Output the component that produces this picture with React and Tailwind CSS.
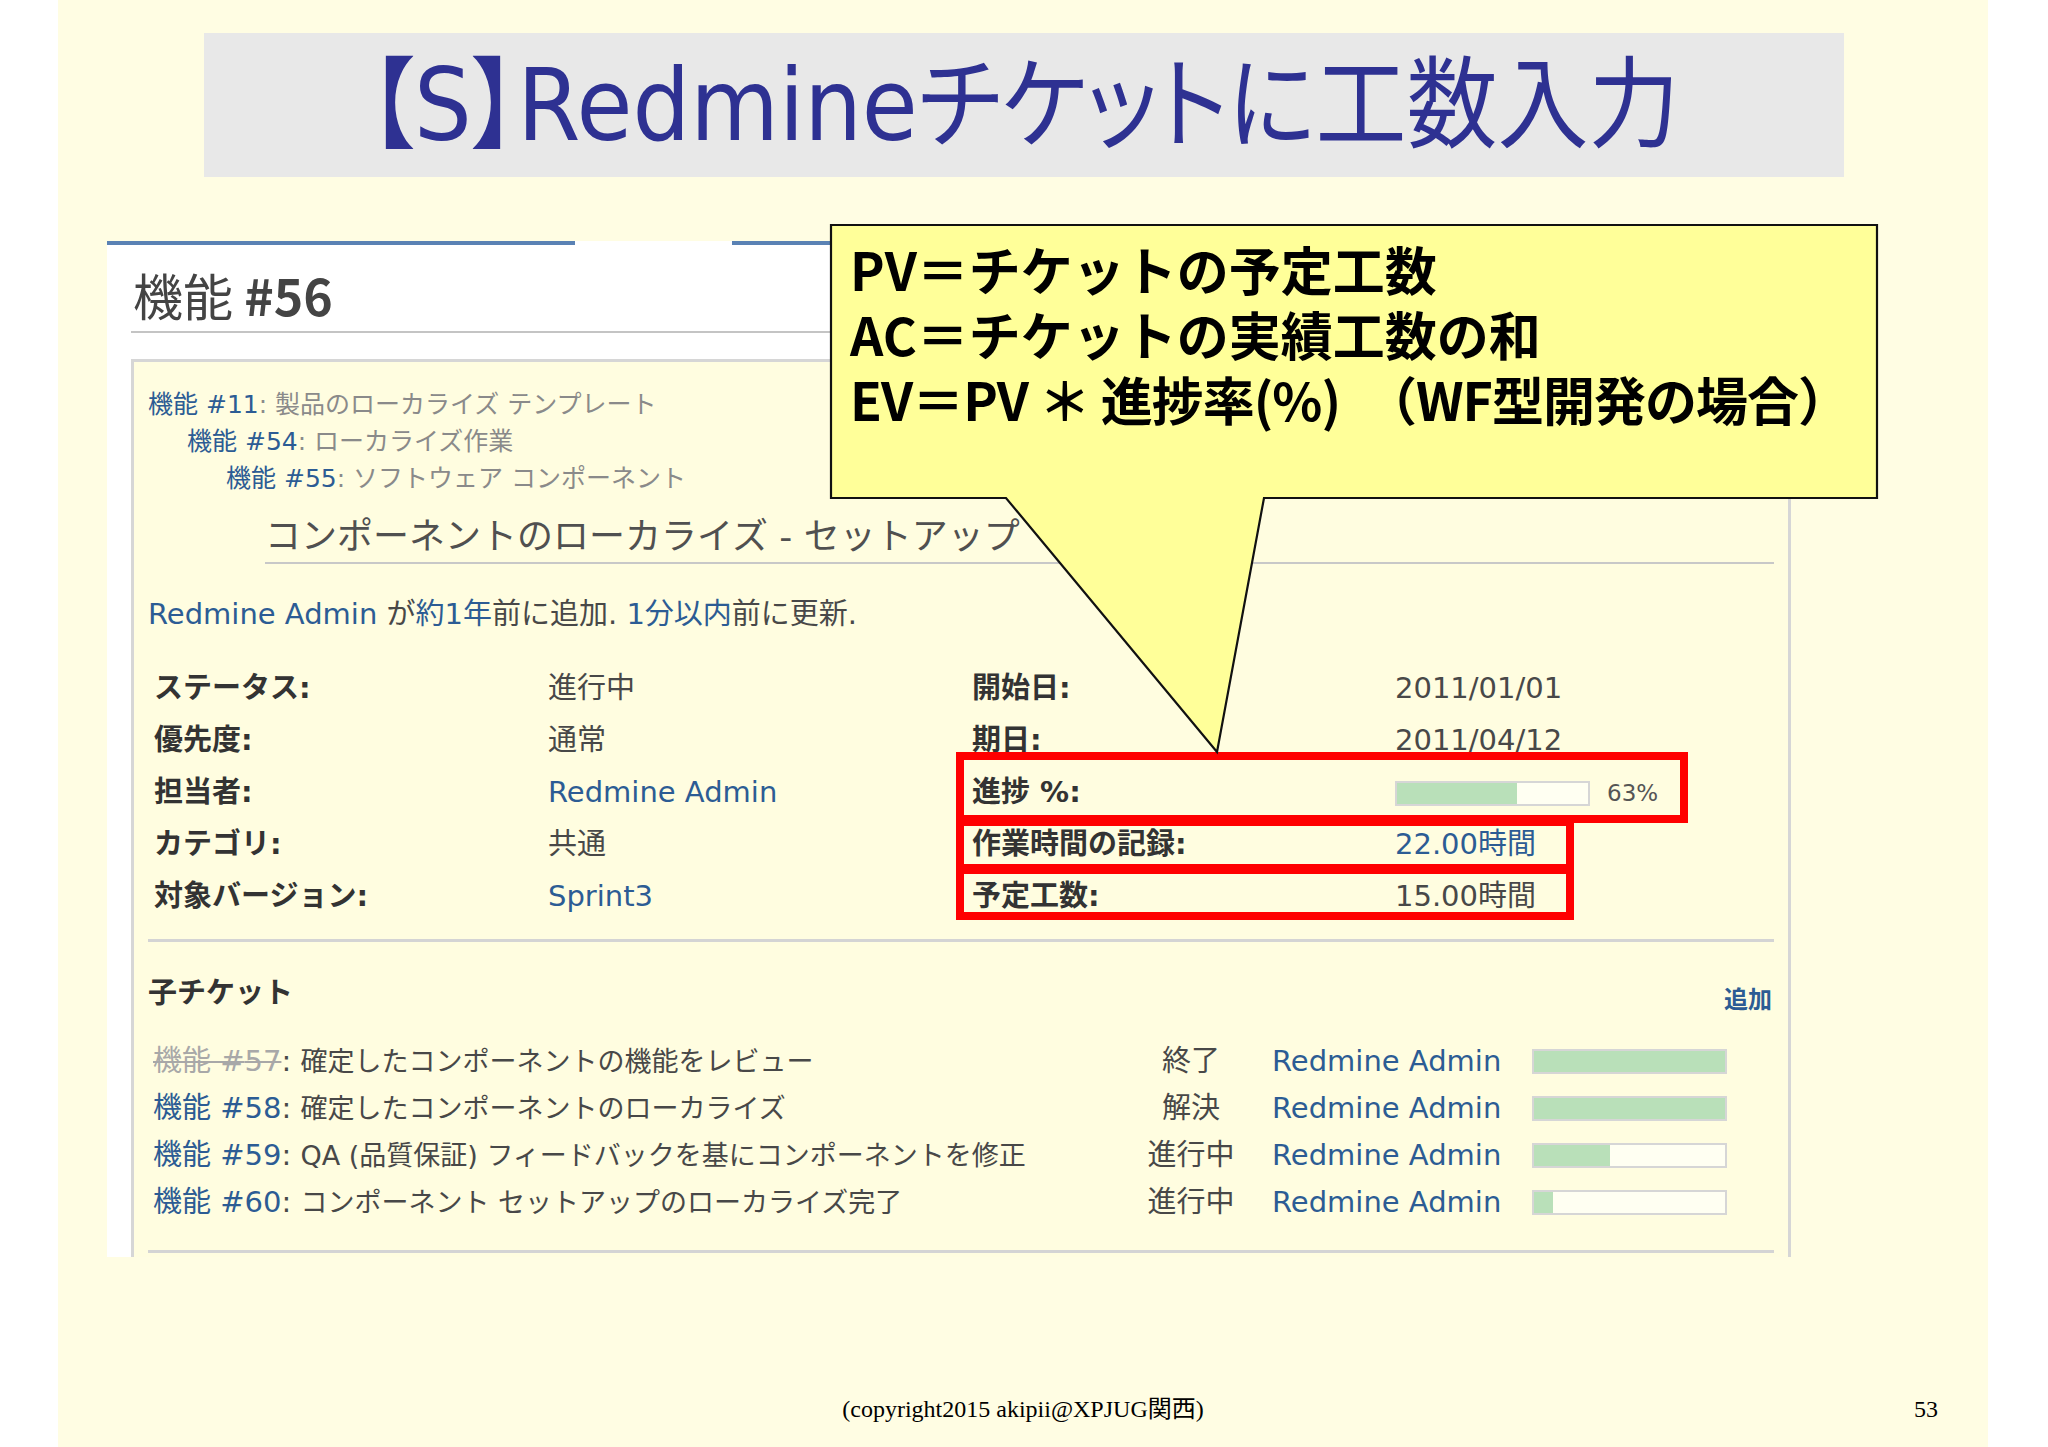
const LINK = "text-[#2c5c94]";
const FONT = "[font-family:'DejaVu_Sans','Noto_Sans_CJK_JP',sans-serif]";

function Bar({ pct, className = "" }) {
  return (
    <div className={"w-[195px] h-[25px] border-2 border-[#d6d6d6] bg-[#fffff2] flex " + className}>
      <div className="h-full bg-[#b9e0b9]" style={{ width: pct + "%" }} />
    </div>
  );
}

function AttrRow({ l1, v1, l2, v2 }) {
  return (
    <div className="grid grid-cols-[394px_424px_423px_1fr] h-[52px] items-center">
      <div className="font-bold text-[#333]">{l1}</div>
      <div>{v1}</div>
      <div className="font-bold text-[#333]">{l2}</div>
      <div>{v2}</div>
    </div>
  );
}

function ChildRow({ id, closed, title, status, pct }) {
  return (
    <div className="flex items-center h-[47px]">
      <div className="w-[988px] whitespace-nowrap">
        <span className={closed ? "text-[#a8a8a8] line-through" : LINK}>機能 #{id}</span>
        <span className="text-[#484848]">: </span>
        <span className="text-[#484848] text-[27px]">{title}</span>
      </div>
      <div className="w-[100px] text-center text-[#484848]">{status}</div>
      <div className={"ml-[31px] w-[260px] whitespace-nowrap " + LINK}>Redmine Admin</div>
      <Bar pct={pct} />
    </div>
  );
}

export default function App() {
  return (
    <div className="w-[2048px] h-[1447px] bg-white flex overflow-hidden">
      <div className="relative ml-[58px] w-[1930px] h-[1447px] bg-[#fffde3] flex flex-col">
        {/* Title */}
        <div className="mt-[33px] ml-[146px] w-[1640px] h-[144px] shrink-0 bg-[#e8e8e8] flex items-center justify-center">
          <h1 className="text-[91px] leading-none text-[#2e3192] whitespace-nowrap [font-family:'DejaVu_Sans','Noto_Sans_CJK_JP',sans-serif] [font-feature-settings:'palt'] scale-y-[1.1]">
            【S】Redmineチケットに工数入力
          </h1>
        </div>

        {/* Redmine screenshot */}
        <div className={"mt-[64px] ml-[49px] w-[1684px] h-[1016px] shrink-0 bg-white flex flex-col overflow-hidden " + FONT}>
          <div className="flex h-[4px] shrink-0">
            <div className="w-[468px] bg-[#5a82b4]" />
            <div className="w-[157px]" />
            <div className="flex-1 bg-[#5a82b4]" />
          </div>
          <div className="ml-[24px] h-[88px] shrink-0 pt-[19px] pl-[2px] border-b-2 border-[#c4c4c4]">
            <h2 className="text-[50px] leading-[60px] text-[#444] [font-family:'Noto_Sans_CJK_JP',sans-serif]">
              機能 <span className="font-semibold">#56</span>
            </h2>
          </div>

          <div className="ml-[24px] mt-[26px] flex-1 border-l-[3px] border-t-[3px] border-r-[3px] border-[#d6d6d6] bg-[#fffde0] px-[14px] text-[29px] text-[#484848] flex flex-col">
            {/* parents */}
            <div className="pt-[24px] text-[25px] leading-[37px] whitespace-nowrap">
              <div>
                <span className={LINK}>機能 #11</span>
                <span className="text-[#8a8a8a]">: 製品のローカライズ テンプレート</span>
              </div>
              <div className="pl-[39px]">
                <span className={LINK}>機能 #54</span>
                <span className="text-[#8a8a8a]">: ローカライズ作業</span>
              </div>
              <div className="pl-[78px]">
                <span className={LINK}>機能 #55</span>
                <span className="text-[#8a8a8a]">: ソフトウェア コンポーネント</span>
              </div>
            </div>

            {/* subject */}
            <div className="ml-[117px] mt-[18px] pb-[3px] border-b-2 border-[#c8c8c8]">
              <h3 className="text-[36px] leading-[44px] text-[#505050] whitespace-nowrap">
                コンポーネントのローカライズ - セットアップ
              </h3>
            </div>

            {/* author */}
            <p className="mt-[30px] leading-[40px] whitespace-nowrap">
              <span className={LINK}>Redmine Admin</span> が<span className={LINK}>約1年</span>前に追加. <span className={LINK}>1分以内</span>前に更新.
            </p>

            {/* attributes */}
            <div className="mt-[29px] ml-[6px]">
              <AttrRow l1="ステータス:" v1="進行中" l2="開始日:" v2="2011/01/01" />
              <AttrRow l1="優先度:" v1="通常" l2="期日:" v2="2011/04/12" />
              <AttrRow
                l1="担当者:"
                v1={<span className={LINK}>Redmine Admin</span>}
                l2="進捗 %:"
                v2={
                  <div className="flex items-center">
                    <Bar pct={63} />
                    <span className="ml-[17px] text-[23px] text-[#555]">63%</span>
                  </div>
                }
              />
              <AttrRow l1="カテゴリ:" v1="共通" l2="作業時間の記録:" v2={<span className={LINK}>22.00時間</span>} />
              <AttrRow l1="対象バージョン:" v1={<span className={LINK}>Sprint3</span>} l2="予定工数:" v2="15.00時間" />
            </div>

            <div className="mt-[16px] border-t-[3px] border-[#d4d4d4]" />

            {/* subtasks */}
            <div className="mt-[26px] flex justify-between items-center pr-[2px]">
              <h3 className="font-bold text-[#333] leading-[40px]">子チケット</h3>
              <span className={"mt-[14px] text-[24px] font-bold " + LINK}>追加</span>
            </div>
            <div className="mt-[20px] ml-[5px]">
              <ChildRow id={57} closed title="確定したコンポーネントの機能をレビュー" status="終了" pct={100} />
              <ChildRow id={58} title="確定したコンポーネントのローカライズ" status="解決" pct={100} />
              <ChildRow id={59} title="QA (品質保証) フィードバックを基にコンポーネントを修正" status="進行中" pct={40} />
              <ChildRow id={60} title="コンポーネント セットアップのローカライズ完了" status="進行中" pct={10} />
            </div>
            <div className="mt-[24px] border-t-[3px] border-[#d4d4d4]" />
          </div>
        </div>

        {/* Footer */}
        <div className="mt-auto mb-[23px] h-[30px] grid grid-cols-[1fr_auto_1fr] items-center text-[24px] leading-[30px] text-black [font-family:'Liberation_Serif','Noto_Sans_CJK_JP',serif]">
          <div />
          <div>(copyright2015 akipii@XPJUG関西)</div>
          <div className="text-right pr-[50px]">53</div>
        </div>

        {/* Red highlight boxes */}
        <div className="absolute left-[898px] top-[752px] w-[732px] h-[71px] border-[8px] border-[#ff0000]" />
        <div className="absolute left-[898px] top-[823px] w-[618px] h-[49px] border-[8px] border-t-[3px] border-[#ff0000]" />
        <div className="absolute left-[898px] top-[872px] w-[618px] h-[48px] border-[8px] border-t-[2px] border-[#ff0000]" />

        {/* Callout */}
        <svg className="absolute left-[771px] top-[223px] w-[1050px] h-[532px]" viewBox="0 0 1050 532">
          <path
            d="M2 2 H1048 V275 H435 L388 529 L177 275 H2 Z"
            fill="#ffff99"
            stroke="#111"
            strokeWidth="2.2"
            strokeLinejoin="miter"
          />
        </svg>
        <div className="absolute left-[792px] top-[236px] text-[52px] leading-[65px] font-bold text-black whitespace-nowrap [font-family:'Noto_Sans_CJK_JP',sans-serif]">
          <div>PV＝チケットの予定工数</div>
          <div>AC＝チケットの実績工数の和</div>
          <div className="tracking-[-1px]">EV＝PV ＊ 進捗率(%)　（WF型開発の場合）</div>
        </div>
      </div>
    </div>
  );
}
